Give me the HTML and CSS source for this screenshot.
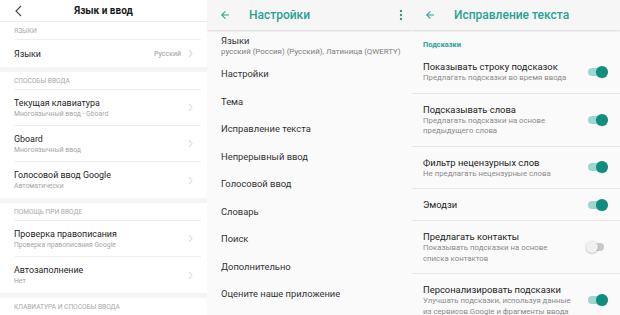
FILE: index.html
```html
<!DOCTYPE html>
<html lang="ru">
<head>
<meta charset="utf-8">
<title>Язык и ввод</title>
<link rel="stylesheet" href="styles.css">
</head>
<body>
<div class="screen">
  <section class="pane miui">
    <header class="miui-head">
      <svg class="miui-back" width="9" height="12" viewBox="0 0 9 12"><polyline points="7,1 2,6 7,11" fill="none" stroke="#444" stroke-width="1.1"/></svg>
      <h1 class="miui-heading">Язык и ввод</h1>
      <span class="miui-spacer"></span>
    </header>
    <div class="miui-label">Языки</div>
    <div class="miui-row short">
      <div class="miui-text"><div class="miui-title">Языки</div></div>
      <span class="miui-value">Русский</span>
      <svg class="chev" width="5" height="9" viewBox="0 0 5 9"><polyline points="1,1 4,4.5 1,8" fill="none" stroke="#c8c8c8" stroke-width="1"/></svg>
    </div>
    <div class="band"></div>
    <div class="miui-label">Способы ввода</div>
    <div class="miui-row">
      <div class="miui-text"><div class="miui-title">Текущая клавиатура</div><div class="miui-sub">Многоязычный ввод - Gboard</div></div>
      <svg class="chev" width="5" height="9" viewBox="0 0 5 9"><polyline points="1,1 4,4.5 1,8" fill="none" stroke="#d0d0d0" stroke-width="1"/></svg>
    </div>
    <div class="miui-row">
      <div class="miui-text"><div class="miui-title">Gboard</div><div class="miui-sub">Многоязычный ввод</div></div>
      <svg class="chev" width="5" height="9" viewBox="0 0 5 9"><polyline points="1,1 4,4.5 1,8" fill="none" stroke="#d0d0d0" stroke-width="1"/></svg>
    </div>
    <div class="miui-row last">
      <div class="miui-text"><div class="miui-title">Голосовой ввод Google</div><div class="miui-sub">Автоматически</div></div>
      <svg class="chev" width="5" height="9" viewBox="0 0 5 9"><polyline points="1,1 4,4.5 1,8" fill="none" stroke="#d0d0d0" stroke-width="1"/></svg>
    </div>
    <div class="band"></div>
    <div class="miui-label">Помощь при вводе</div>
    <div class="miui-row">
      <div class="miui-text"><div class="miui-title">Проверка правописания</div><div class="miui-sub">Проверка правописания Google</div></div>
      <svg class="chev" width="5" height="9" viewBox="0 0 5 9"><polyline points="1,1 4,4.5 1,8" fill="none" stroke="#d0d0d0" stroke-width="1"/></svg>
    </div>
    <div class="miui-row last">
      <div class="miui-text"><div class="miui-title">Автозаполнение</div><div class="miui-sub">Нет</div></div>
      <svg class="chev" width="5" height="9" viewBox="0 0 5 9"><polyline points="1,1 4,4.5 1,8" fill="none" stroke="#d0d0d0" stroke-width="1"/></svg>
    </div>
    <div class="band"></div>
    <div class="miui-label">Клавиатура и способы ввода</div>
  </section>

  <section class="pane material">
    <header class="appbar">
      <svg class="back" width="12" height="12" viewBox="0 0 24 24"><path d="M20 11H7.83l5.59-5.59L12 4l-8 8 8 8 1.41-1.41L7.83 13H20v-2z" fill="#26a393"/></svg>
      <h1 class="appbar-title">Настройки</h1>
      <svg class="more" width="4" height="12" viewBox="0 0 4 12"><circle cx="2" cy="2" r="1.2" fill="#3f8f86"/><circle cx="2" cy="6" r="1.2" fill="#3f8f86"/><circle cx="2" cy="10" r="1.2" fill="#3f8f86"/></svg>
    </header>
    <div class="m-item two">
      <div class="m-title">Языки</div>
      <div class="m-sub">русский (Россия) (Русский), Латиница (QWERTY)</div>
    </div>
    <div class="m-item">Настройки</div>
    <div class="m-item">Тема</div>
    <div class="m-item">Исправление текста</div>
    <div class="m-item">Непрерывный ввод</div>
    <div class="m-item">Голосовой ввод</div>
    <div class="m-item">Словарь</div>
    <div class="m-item">Поиск</div>
    <div class="m-item">Дополнительно</div>
    <div class="m-item">Оцените наше приложение</div>
  </section>

  <section class="pane material">
    <header class="appbar">
      <svg class="back" width="12" height="12" viewBox="0 0 24 24"><path d="M20 11H7.83l5.59-5.59L12 4l-8 8 8 8 1.41-1.41L7.83 13H20v-2z" fill="#26a393"/></svg>
      <h1 class="appbar-title">Исправление текста</h1>
    </header>
    <div class="p-label">Подсказки</div>
    <div class="p-item">
      <div class="p-text"><div class="p-title">Показывать строку подсказок</div><div class="p-sub">Предлагать подсказки во время ввода</div></div>
      <span class="toggle on"><span class="track"></span><span class="thumb"></span></span>
    </div>
    <div class="p-item">
      <div class="p-text"><div class="p-title">Подсказывать слова</div><div class="p-sub">Предлагать подсказки на основе<br>предыдущего слова</div></div>
      <span class="toggle on"><span class="track"></span><span class="thumb"></span></span>
    </div>
    <div class="p-item">
      <div class="p-text"><div class="p-title">Фильтр нецензурных слов</div><div class="p-sub">Не предлагать нецензурные слова</div></div>
      <span class="toggle on"><span class="track"></span><span class="thumb"></span></span>
    </div>
    <div class="p-item">
      <div class="p-text"><div class="p-title">Эмодзи</div></div>
      <span class="toggle on"><span class="track"></span><span class="thumb"></span></span>
    </div>
    <div class="p-item">
      <div class="p-text"><div class="p-title">Предлагать контакты</div><div class="p-sub">Показывать подсказки на основе<br>списка контактов</div></div>
      <span class="toggle"><span class="track"></span><span class="thumb"></span></span>
    </div>
    <div class="p-item">
      <div class="p-text"><div class="p-title">Персонализировать подсказки</div><div class="p-sub">Улучшать подсказки, используя данные<br>из сервисов Google и фрагменты ввода</div></div>
      <span class="toggle on"><span class="track"></span><span class="thumb"></span></span>
    </div>
  </section>
</div>
</body>
</html>
```

FILE: styles.css
```css
* { box-sizing: border-box; margin: 0; padding: 0; }
html, body { width: 620px; height: 315px; overflow: hidden; background: #fff; }
body { font-family: Roboto, "Noto Sans", sans-serif; color: #222; }

.screen {
  display: grid;
  grid-template-columns: 207px 205px 208px;
  height: 315px;
  overflow: hidden;
}
.pane { overflow: hidden; height: 315px; }

/* ---------- MIUI pane ---------- */
.miui { background: #fff; }
.miui-head {
  height: 22px;
  display: grid;
  grid-template-columns: 30px 1fr 30px;
  align-items: center;
  border-bottom: 1px solid #ededed;
}
.miui-back { margin-left: 14px; }
.miui-heading { font-size: 10px; font-weight: 700; text-align: center; color: #1a1a1a; }
.miui-label {
  height: 18px;
  margin-left: 14px;
  margin-right: 6px;
  display: flex;
  align-items: center;
  font-size: 6.6px;
  text-transform: uppercase;
  color: #a8a8a8;
  border-bottom: 1px solid #efefef;
}
.miui-row {
  height: 36px;
  margin-left: 14px;
  margin-right: 6px;
  padding-right: 8px;
  display: flex;
  align-items: center;
  border-bottom: 1px solid #efefef;
}
.miui-row.short { height: 27px; border-bottom: none; }
.miui-row.last { border-bottom: none; }
.miui-text { flex: 1; min-width: 0; }
.miui-title { font-size: 8.9px; line-height: 12px; color: #1e1e1e; }
.miui-sub { font-size: 6.8px; line-height: 10px; color: #a5a5a5; }
.miui-value { font-size: 7px; color: #9a9a9a; margin-right: 7px; }
.band { height: 5px; background: #f5f5f5; }

/* ---------- Material panes ---------- */
.material { background: #fafafa; }
.appbar {
  height: 30px;
  display: flex;
  align-items: center;
  padding-left: 12px;
  padding-right: 9px;
  background: #f6f6f6;
  box-shadow: 0 1px 2px rgba(0,0,0,0.14);
  position: relative;
}
.back { flex: none; }
.appbar-title {
  font-size: 12px;
  font-weight: 500;
  color: #26a393;
  margin-left: 18px;
  flex: 1;
}
.more { flex: none; }

.m-item {
  height: 27.5px;
  display: flex;
  align-items: center;
  padding-left: 14px;
  font-size: 9.4px;
  color: #333;
}
.m-item.two {
  height: 30px;
  flex-direction: column;
  align-items: flex-start;
  justify-content: center;
}
.m-title { font-size: 9.4px; line-height: 13px; color: #333; }
.m-sub { font-size: 7.9px; line-height: 10px; color: #7a7a7a; white-space: nowrap; }

.p-label {
  height: 21px;
  padding-left: 11px;
  display: flex;
  align-items: flex-end;
  padding-bottom: 2px;
  font-size: 7.4px;
  font-weight: 700;
  color: #26a393;
}
.p-item {
  display: flex;
  align-items: center;
  padding: 9px 12px 9px 11px;
  border-bottom: 1px solid #e6e6e6;
}
.p-item:last-child { border-bottom: none; }
.p-text { flex: 1; min-width: 0; }
.p-title { font-size: 9.4px; line-height: 13px; color: #222; }
.p-sub { font-size: 7.8px; line-height: 10.5px; color: #8a8a8a; }

.toggle {
  position: relative;
  flex: none;
  width: 20px;
  height: 12px;
}
.track {
  position: absolute;
  left: 0;
  top: 2px;
  width: 16px;
  height: 8px;
  border-radius: 4px;
  background: #c9c9c9;
}
.thumb {
  position: absolute;
  top: 0;
  left: -2px;
  width: 12px;
  height: 12px;
  border-radius: 50%;
  background: #f1f1f1;
  box-shadow: 0 0.5px 1.5px rgba(0,0,0,0.35);
}
.toggle.on .track { background: #9fd6cf; }
.toggle.on .thumb { left: 8px; background: #0e8e7e; box-shadow: 0 0.5px 1px rgba(0,0,0,0.2); }
```
